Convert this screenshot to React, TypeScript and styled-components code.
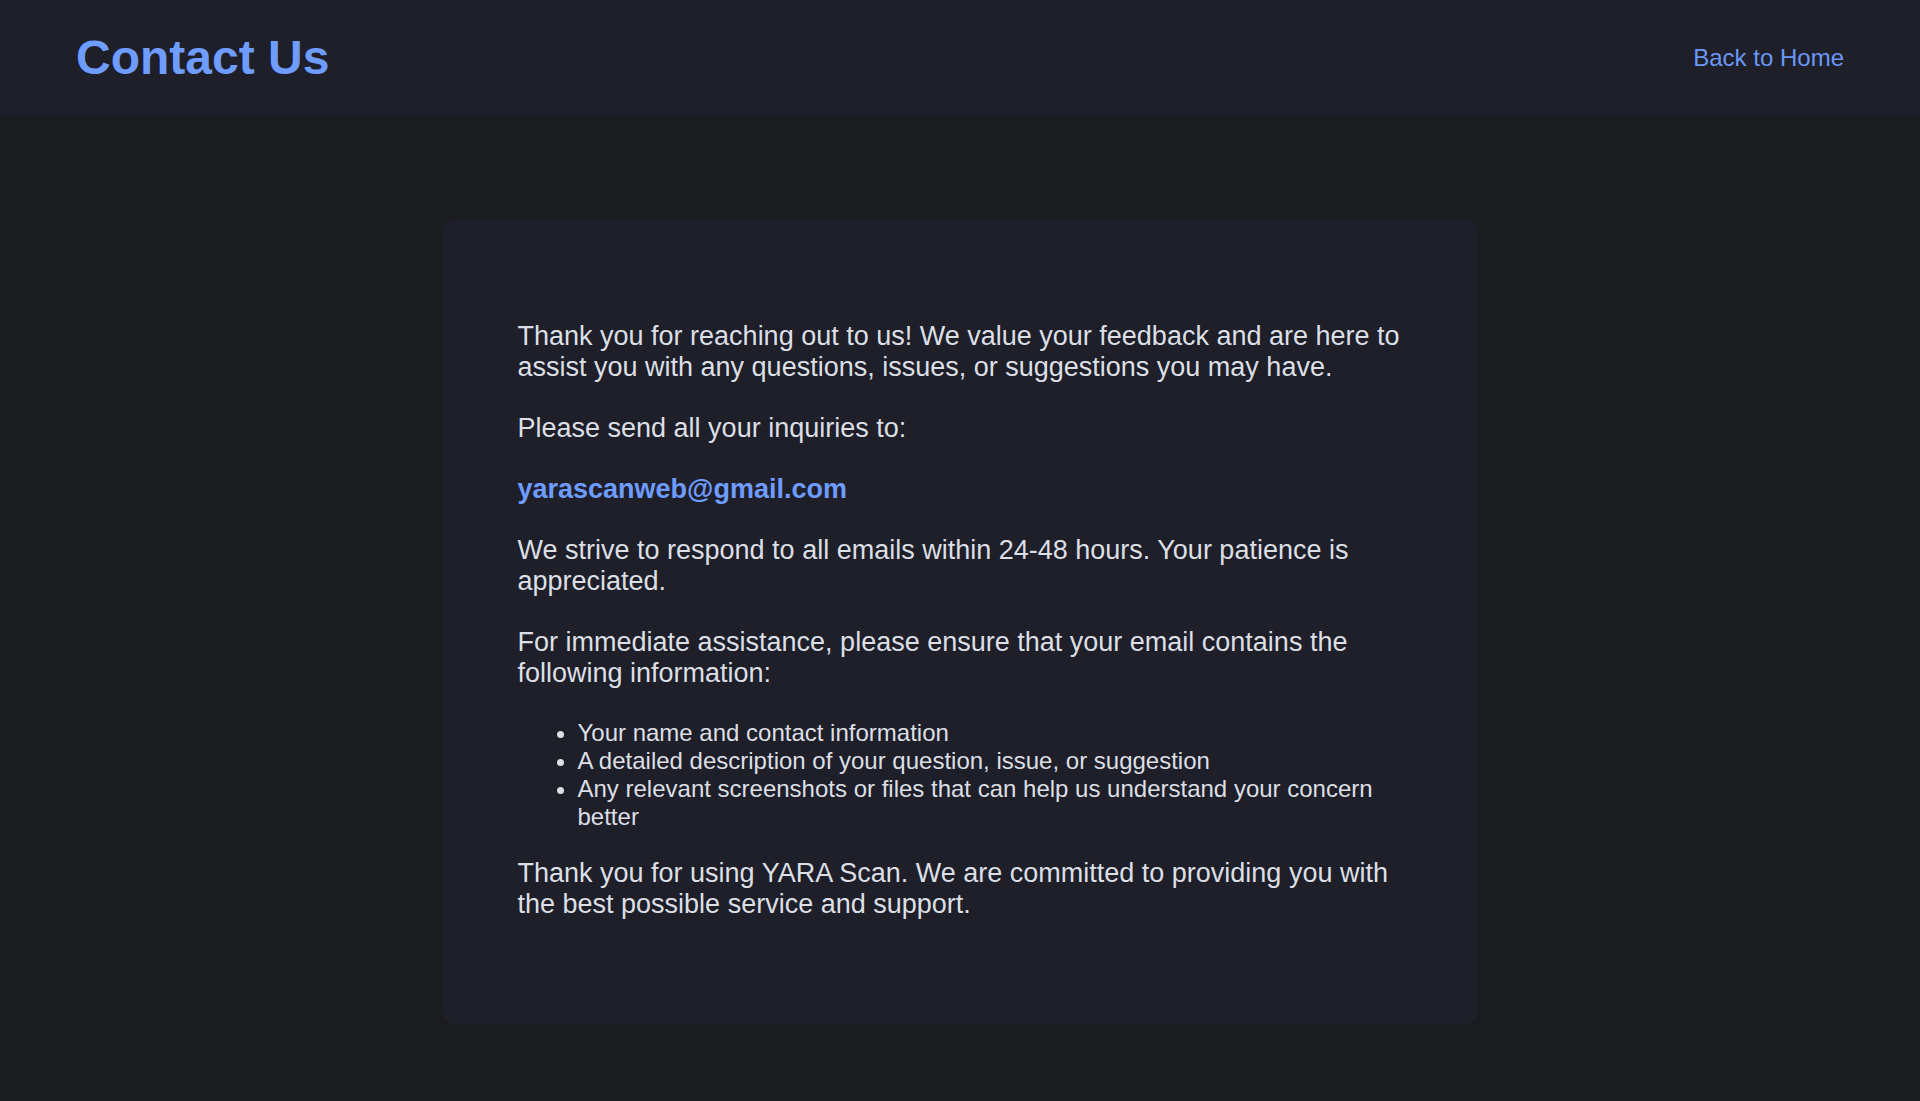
import React from "react";
import styled, { createGlobalStyle } from "styled-components";

const GlobalStyle = createGlobalStyle`
  html, body {
    margin: 0;
    padding: 0;
    background: #1b1c20;
  }
  body {
    font-family: "Liberation Sans", Arial, Helvetica, sans-serif;
    color: #dcdfe6;
  }
`;

const Page = styled.div`
  min-height: 100vh;
  background: #1b1c20;
  display: flex;
  flex-direction: column;
`;

const Header = styled.header`
  height: 115px;
  box-sizing: border-box;
  padding: 0 76px;
  background: #1e1f28;
  display: flex;
  align-items: center;
  justify-content: space-between;
`;

const Title = styled.h1`
  margin: 0;
  font-size: 48px;
  font-weight: 700;
  color: #6f9cff;
`;

const HomeLink = styled.a`
  font-size: 24px;
  color: #6b98f7;
  text-decoration: none;
  cursor: pointer;
`;

const Main = styled.main`
  display: flex;
  justify-content: center;
  padding: 105px 0 75px;
`;

const Card = styled.section`
  width: 1035px;
  box-sizing: border-box;
  padding: 101px 75px 74px;
  background: #1e1f28;
  border-radius: 12px;
`;

const Paragraph = styled.p`
  margin: 0 0 30px;
  font-size: 27px;
  line-height: normal;
  color: #dcdfe6;
`;

const Email = styled.a`
  font-weight: 700;
  color: #6f9cff;
  text-decoration: none;
`;

const List = styled.ul`
  margin: 30px 0 27px;
  padding-left: 60px;
  font-size: 24px;
  line-height: normal;
  color: #dcdfe6;
`;

const Item = styled.li`
  margin: 0;
`;

const items = [
  "Your name and contact information",
  "A detailed description of your question, issue, or suggestion",
  "Any relevant screenshots or files that can help us understand your concern better",
];

export default function App() {
  return (
    <>
      <GlobalStyle />
      <Page>
        <Header>
          <Title>Contact Us</Title>
          <HomeLink href="#">Back to Home</HomeLink>
        </Header>
        <Main>
          <Card>
            <Paragraph>
              Thank you for reaching out to us! We value your feedback and are here to
              assist you with any questions, issues, or suggestions you may have.
            </Paragraph>
            <Paragraph>Please send all your inquiries to:</Paragraph>
            <Paragraph>
              <Email href="#">yarascanweb@gmail.com</Email>
            </Paragraph>
            <Paragraph>
              We strive to respond to all emails within 24-48 hours. Your patience is
              appreciated.
            </Paragraph>
            <Paragraph>
              For immediate assistance, please ensure that your email contains the
              following information:
            </Paragraph>
            <List>
              {items.map((t) => (
                <Item key={t}>{t}</Item>
              ))}
            </List>
            <Paragraph>
              Thank you for using YARA Scan. We are committed to providing you with the
              best possible service and support.
            </Paragraph>
          </Card>
        </Main>
      </Page>
    </>
  );
}
